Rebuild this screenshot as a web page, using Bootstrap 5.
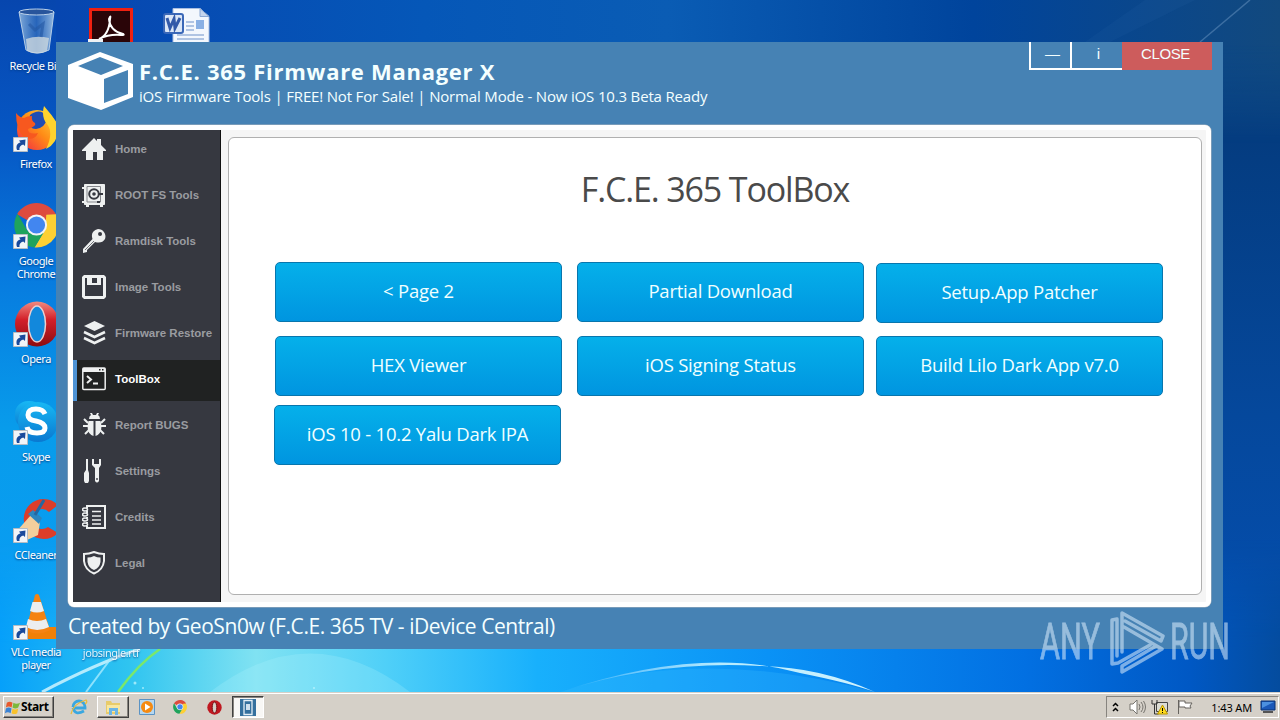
<!DOCTYPE html>
<html lang="en">
<head>
  <meta charset="UTF-8">
  <meta name="viewport" content="width=device-width, initial-scale=1.0">
  <title>F.C.E. 365 Firmware Manager X</title>
  <link href="https://cdn.jsdelivr.net/npm/bootstrap@5.3.0/dist/css/bootstrap.min.css" rel="stylesheet">
  <style>
    body { width: 1280px; height: 720px; overflow: hidden; font-family: "Open Sans", "Noto Sans", sans-serif; line-height: 1; }
    svg { display: block; flex: none; }
    .desktop { height: 692px; }
    .wallpaper { inset: 0; }

    /* desktop shortcuts */
    .shortcuts { gap: 3px; top: 8px; left: 0; height: 684px; }
    .shortcut-col { width: 72px; }
    .shortcut { height: 98px; font: 11px/13px "Noto Sans", sans-serif; letter-spacing: -.45px; text-shadow: 0 1px 2px #003a80; }
    .shortcut span { margin-top: 3px; }
    .shortcut.text-only { height: 49px; opacity: .85; }

    /* application window */
    .app-window { left: 56px; top: 42px; width: 1167px; height: 607px; background: #4682b4; padding: 0 12px; color: #f4ffff; }
    .app-header { height: 83px; }
    .app-logo { margin-top: 10px; }
    .app-title { font-size: 22px; font-weight: 700; margin: 17px 0 0 6px; line-height: 24px; white-space: nowrap; letter-spacing: .72px; }
    .app-subtitle { font-size: 15px; margin: 1px 0 0 6px; line-height: 24px; white-space: nowrap; letter-spacing: -.17px; }
    .win-controls { margin-right: -1px; height: 28px; font-family: "Liberation Sans", sans-serif; font-size: 15px; }
    .win-controls div { display: flex; justify-content: center; padding-top: 4px; border-bottom: 2px solid #fff; }
    .win-controls .wc-min { width: 41px; border-left: 2px solid #fff; padding-left: 4px; }
    .win-controls .wc-info { width: 52px; border-left: 2px solid #fff; padding-left: 3px; }
    .win-controls .wc-close { width: 90px; background: #cd5c5c; border-bottom: 0; letter-spacing: -.4px; padding-right: 3px; }
    .app-panel { width: 1143px; height: 482px; background: #f5f5f5; border: 5px solid #fff; border-radius: 6px; box-shadow: 0 0 0 .5px #a9b4bd; }
    .side-menu { width: 148px; background: #363840; border-right: 1px solid #111; gap: 5px; }
    .side-item { height: 41px; padding: 0 0 3px 9px; gap: 9px; font: bold 11.5px/14px "Liberation Sans", sans-serif; color: #9a9ca0; white-space: nowrap; }
    .side-item svg { color: #eef0f0; }
    .side-item.current { background: #202222; color: #fff; border-left: 4px solid #4d93d6; padding-left: 5px; }
    .page-box { width: 974px; height: 458px; margin: 7px 0 0 7px; border: 1px solid #b0b0b0; border-radius: 6px; background: #fff; }
    .page-title { font-size: 34px; line-height: 46px; color: #4a4a4a; font-weight: 400; margin: 28px 0 50px; letter-spacing: -1.15px; }
    .tool-grid { padding-left: 46px; }
    .tool-col { width: 287px; gap: 14px; margin-right: 15px; }
    .tool-col + .tool-col { margin-right: 12px; }
    .tool-btn { height: 60px; flex: none; border-radius: 5px; border: 1px solid #0876ad; background: linear-gradient(#05b0ea, #0095e0); color: #f0ffff; font-size: 18.5px; letter-spacing: -.22px; padding: 0 0 2px; }
    .tool-btn:hover { color: #fff; }
    .tool-btn.last-row { margin: -5px 1px 0 -1px; }
    .tool-btn.lowered { margin: 1px 0 -1px; }
    .app-footer { height: 42px; font-size: 21px; white-space: nowrap; letter-spacing: -.43px; padding-bottom: 4px; }

    .watermark { left: 1036px; top: 606px; overflow: visible; }

    /* taskbar */
    .taskbar { height: 28px; background: #d5d0c8; border-top: 1px solid #d5d0c8; box-shadow: inset 0 1px #fff; padding: 3px 1px 2px 3px; font-family: "Noto Sans", sans-serif; }
    .start-btn { width: 51px; height: 22px; border: 1px solid; border-color: #fff #404040 #404040 #fff; box-shadow: inset -1px -1px #87847f; font: bold 12px/20px "Noto Sans", sans-serif; color: #000; letter-spacing: -.4px; }
    .quick-launch { margin-left: 9px; gap: 1.8px; }
    .task-btn { width: 32px; height: 22px; }
    .task-btn.raised { border: 1px solid; border-color: #fff #404040 #404040 #fff; box-shadow: inset -1px -1px #87847f; background: #dedad3; }
    .task-btn.pressed { border: 1px solid; border-color: #404040 #fff #fff #404040; box-shadow: inset 1px 1px #87847f; background: #f8f7f5; }
    .tray { width: 173px; height: 22px; border: 1px solid; border-color: #87847f #fff #fff #87847f; font-size: 11px; color: #000; padding: 0 2px 0 3px; letter-spacing: -.15px; }
  </style>
</head>
<body>
  <!-- shared icon shapes -->
  <svg width="0" height="0" class="position-absolute">
    <defs>
      <linearGradient id="redball" x2="0" y2="1"><stop stop-color="#f08a80"/><stop offset=".4" stop-color="#d3202a"/><stop offset="1" stop-color="#8d0c10"/></linearGradient>
      <linearGradient id="glass"><stop stop-color="#8fb6de" stop-opacity=".9"/><stop offset=".5" stop-color="#3e78c0" stop-opacity=".6"/><stop offset="1" stop-color="#a5c6e6" stop-opacity=".9"/></linearGradient>
      <linearGradient id="fox" x1="0" y1="1" x2="1" y2="0"><stop stop-color="#f0204c"/><stop offset=".5" stop-color="#ff8a16"/><stop offset="1" stop-color="#ffe03c"/></linearGradient>
      <linearGradient id="sky" x2="0" y2="1"><stop stop-color="#18b8f4"/><stop offset="1" stop-color="#0a78d0"/></linearGradient>
      <symbol id="arrow" viewBox="0 0 15 15"><path d="M.5.5h14v14H.5z" fill="#f2f5f8" stroke="#b5bcc4"/><path d="M4 13C2.500 8.500 4.500 6 7.500 5.500L6 3.500 12.500 2.500 12 9 10.200 7.500C7.500 8.500 6 10 6.500 13z" fill="#1a4a9c"/></symbol>
      <symbol id="chrome" viewBox="0 0 46 46">
        <path d="M23 23 3.100 11.500A23 23 0 0 1 42.900 11.500z" fill="#dd4b3e"/><path d="M23 1A22 22 0 0 1 42.500 12H23z" fill="#dd4b3e"/>
        <path d="M42.900 11.500A23 23 0 0 1 21 45.500L32 27 33 12z" fill="#fdd034"/><path d="M3.500 11A23 23 0 0 0 21 45.500L31 29 14 29z" fill="#1fa35c"/>
        <circle cx="23" cy="22.500" r="10.800" fill="#f4f4f4"/><circle cx="23" cy="22.500" r="8.800" fill="#4286f0"/>
      </symbol>
      <symbol id="opera" viewBox="0 0 46 46"><ellipse cx="23" cy="23" rx="22" ry="22.500" fill="url(#redball)"/><ellipse cx="23" cy="23" rx="8.500" ry="18" fill="#1288dc" stroke="#ead0d0" stroke-width="1.500"/></symbol>
      <symbol id="winflag" viewBox="0 0 18 18"><path d="M3 4Q6 2 9 4L8 9Q5 7 2 9z" fill="#e8592b"/><path d="M10 4Q13 6 17 4L15 9Q12 11 9 9z" fill="#7db83a"/><path d="M2 10Q5 8 8 10L7 15Q4 13 1 15z" fill="#3a83d4"/><path d="M9 10Q12 12 15 10L14 15Q11 17 8 15z" fill="#f8c22c"/></symbol>
    </defs>
  </svg>

  <div class="desktop position-relative overflow-hidden">
    <svg class="wallpaper position-absolute" width="1280" height="692">
      <defs>
        <linearGradient id="wv" x2="0" y2="1"><stop stop-color="#0746ae"/><stop offset=".2" stop-color="#0657c4"/><stop offset=".4" stop-color="#077bdf"/><stop offset=".62" stop-color="#089ceb"/><stop offset=".95" stop-color="#0a9df6"/></linearGradient>
        <linearGradient id="wh" x2="0" y2="1"><stop stop-color="#0b4a8a"/><stop offset=".2" stop-color="#043c80"/><stop offset=".6" stop-color="#05489c"/><stop offset="1" stop-color="#0450b4"/></linearGradient>
        <linearGradient id="fadeR"><stop offset=".6" stop-color="#fff" stop-opacity="0"/><stop offset=".95" stop-color="#fff"/></linearGradient>
        <mask id="mr"><rect width="1280" height="692" fill="url(#fadeR)"/></mask>
        <linearGradient id="fadeUp" x2="0" y2="1"><stop stop-color="#fff" stop-opacity="0"/><stop offset="1" stop-color="#fff"/></linearGradient>
        <mask id="mb"><rect y="540" width="1280" height="110" fill="url(#fadeUp)"/><rect y="650" width="1280" height="42" fill="#fff"/></mask>
        <linearGradient id="fadeDown" x2="0" y2="1"><stop stop-color="#fff"/><stop offset="1" stop-color="#fff" stop-opacity="0"/></linearGradient>
        <mask id="mt"><rect width="1280" height="43" fill="#fff"/><rect y="43" width="1280" height="100" fill="url(#fadeDown)"/></mask>
        <linearGradient id="wtop"><stop stop-color="#0746b0"/><stop offset=".3" stop-color="#0557b8"/><stop offset=".5" stop-color="#0a5cb4"/><stop offset=".75" stop-color="#00449c"/><stop offset="1" stop-color="#12497e"/></linearGradient>
        <linearGradient id="wbot"><stop stop-color="#06a0fa"/><stop offset=".1" stop-color="#2fc4f0"/><stop offset=".2" stop-color="#80e2f2"/><stop offset=".3" stop-color="#50d0f8"/><stop offset=".42" stop-color="#18b0fc"/><stop offset=".6" stop-color="#0a92f6"/><stop offset=".8" stop-color="#0270e2"/><stop offset=".93" stop-color="#0058c4"/><stop offset="1" stop-color="#044c9e"/></linearGradient>
        <linearGradient id="arc"><stop stop-color="#fff" stop-opacity="0"/><stop offset=".5" stop-color="#c8f4ff"/><stop offset="1" stop-color="#e8ffff"/></linearGradient>
      </defs>
      <rect width="1280" height="692" fill="url(#wv)"/>
      <rect width="1280" height="692" fill="url(#wh)" mask="url(#mr)"/>
      <rect x="56" width="1224" height="143" fill="url(#wtop)" mask="url(#mt)"/>
      <rect y="540" width="1280" height="152" fill="url(#wbot)" mask="url(#mb)"/>
      <path d="M1200 42 1250 0" stroke="#5c88b8" stroke-opacity=".6" stroke-width="1.500"/>
      <path d="M1085 42 1145 0h50L1110 42z" fill="#2a68a8" opacity=".15"/>
      <path d="M210 692Q310 615 410 692z" fill="#b8f4ff" opacity=".22"/>
      <path d="M42 692Q95 664 140 649" stroke="#d8f8ff" stroke-width="3" fill="none" opacity=".8"/>
      <path d="M86 692 112 657" stroke="#a8ecff" stroke-width="2" opacity=".8"/>
      <path d="M118 692Q138 664 160 649" stroke="#7be86a" stroke-width="2.500" fill="none"/>
      <path d="M560 692Q700 645 800 673 850 683 875 692 820 667 760 666 660 660 560 692z" fill="url(#arc)" opacity=".9"/>
      <path d="M560 692Q700 645 875 692z" fill="#40c0ff" opacity=".25"/>
      <g fill="#c8f8ff" opacity=".7"><circle cx="135" cy="683" r="1.500"/><circle cx="143" cy="688" r="1"/><circle cx="314" cy="688" r="1"/></g>
    </svg>

    <div class="shortcuts position-absolute d-flex text-white text-center">
      <div class="shortcut-col d-flex flex-column">
        <div class="shortcut d-flex flex-column align-items-center">
          <svg width="48" height="48"><path d="M7 4h35L37 42q-12 6-23 0z" fill="url(#glass)" stroke="#b5cde6"/><path d="M14 31q11-4 23-1l-2 13q-10 5-20 0z" fill="#cdd8de" opacity=".8"/><ellipse cx="24.500" cy="4" rx="17.500" ry="3" fill="#28559c" stroke="#bcd2ea"/><path d="m17 16 6 6 8-6-2 13" fill="none" stroke="#2458a4" stroke-width="3" opacity=".6"/></svg>
          <span class="text-nowrap">Recycle Bin</span>
        </div>
        <div class="shortcut d-flex flex-column align-items-center">
          <svg width="48" height="48"><circle cx="25" cy="24" r="20" fill="url(#fox)"/><path d="M18 9q10-8 18 2-3 11-12 12-9 0-6-14z" fill="#204db4"/><path d="M32 0q8 9 13 17 4 18-11 26 8-16 1-25-6-7-3-18z" fill="#ffd32e"/><path d="M4 7q4 5 8 5 3-2 8-2-1 5 3 7 2 3-7 6 0 6 10 4-4 9-14 4Q4 24 4 7z" fill="#f7581f"/><use href="#arrow" x="1" y="31" width="15" height="15"/></svg>
          <span>Firefox</span>
        </div>
        <div class="shortcut d-flex flex-column align-items-center">
          <svg width="48" height="48"><use href="#chrome" x="2" y="0" width="45" height="45"/><use href="#arrow" x="1" y="31" width="15" height="15"/></svg>
          <span>Google<br>Chrome</span>
        </div>
        <div class="shortcut d-flex flex-column align-items-center">
          <svg width="48" height="48"><use href="#opera" x="2" y="0" width="46" height="46"/><use href="#arrow" x="1" y="31" width="15" height="15"/></svg>
          <span>Opera</span>
        </div>
        <div class="shortcut d-flex flex-column align-items-center">
          <svg width="48" height="48"><rect x="3" y="2" width="28" height="28" rx="13" fill="url(#sky)"/><circle cx="26" cy="23" r="20" fill="url(#sky)"/><path d="M33 15q-2-5-9-5-8 0-8 6 0 5 8 6 9 2 9 7 0 5-8 5-9 0-10-6" fill="none" stroke="#fff" stroke-width="5"/><use href="#arrow" x="1" y="31" width="15" height="15"/></svg>
          <span>Skype</span>
        </div>
        <div class="shortcut d-flex flex-column align-items-center">
          <svg width="48" height="48"><path d="M46 8A20 20 0 1 0 46 36L36 30A10 10 0 1 1 37 15z" fill="#dc3d2a"/><path d="M19 18 28 25 26 38 15 43 3 36z" fill="#f3cf9c"/><path d="m16 17 5-4 9 8-3 6z" fill="#2c86c0"/><path d="M23 18 32 3" stroke="#2667a0" stroke-width="3"/><use href="#arrow" x="1" y="31" width="15" height="15"/></svg>
          <span>CCleaner</span>
        </div>
        <div class="shortcut d-flex flex-column align-items-center">
          <svg width="48" height="48"><path d="M9 33h36l4 12H7z" fill="#f08008"/><path d="M23 1q2-2 4 0l11 35q-13 7-24 0z" fill="#f58312"/><path d="M20.500 8h8.500l3 9q-7 3-14 0zM16 25q9 4 18 0l3 8q-12 6-23 0z" fill="#eceef0"/><use href="#arrow" x="1" y="31" width="15" height="15"/></svg>
          <span>VLC media<br>player</span>
        </div>
      </div>
      <div class="shortcut-col d-flex flex-column justify-content-between">
        <div class="shortcut d-flex flex-column align-items-center">
          <svg width="48" height="48"><path d="M3.500 1.500h41v44h-41z" fill="#2a0508" stroke="#f02010" stroke-width="3"/><path d="M12 31q10-4 11-20 1-5-1 0 1 12 14 15 2 1-2 1-12-1-22 4z" fill="none" stroke="#fff" stroke-width="2"/><path d="M1 31h15v15H1z" fill="#eef1f4"/></svg>
        </div>
        <div class="shortcut text-only d-flex flex-column align-items-center"><span>jobsingle.rtf</span></div>
      </div>
      <div class="shortcut-col">
        <div class="shortcut d-flex flex-column align-items-center">
          <svg width="48" height="48"><path d="M11 .5h27l9 8V46H11z" fill="#f3f7fd" stroke="#a9bee0"/><path d="M38 .5v8h9z" fill="#c5d5ed" stroke="#8ba8d4"/><path d="M24 14h8M24 18h8M24 22h8M15 27h27M15 31h27" stroke="#9ab4da" stroke-width="1.500"/><path d="M34 12h8v9h-8z" fill="#8ab0e4"/><rect x="2" y="6" width="19" height="19" rx="2" fill="#dbe6f6" stroke="#3b68b8" stroke-width="2"/><path d="m5 10 3 10 4-9 1 9 5-10" fill="none" stroke="#3259a8" stroke-width="3"/></svg>
        </div>
      </div>
    </div>

    <main class="app-window position-absolute d-flex flex-column">
      <header class="app-header d-flex">
        <svg class="app-logo" width="65" height="58" viewBox="0 0 65 58" fill="#fff"><path fill-rule="evenodd" d="M32 0 65 12v33L33 58 0 46V13zM32 5 10 14l23 9 22-9zM60 18 36 27v24l24-9z"/></svg>
        <div class="flex-grow-1">
          <h1 class="app-title">F.C.E. 365 Firmware Manager X</h1>
          <div class="app-subtitle">iOS Firmware Tools | FREE! Not For Sale! | Normal Mode - Now iOS 10.3 Beta Ready</div>
        </div>
        <div class="win-controls d-flex">
          <div class="wc-min">—</div>
          <div class="wc-info">i</div>
          <div class="wc-close">CLOSE</div>
        </div>
      </header>

      <section class="app-panel d-flex">
        <nav class="side-menu d-flex flex-column">
          <div class="side-item d-flex align-items-center">
            <svg width="24" height="24" fill="currentColor"><path d="M0 13 12 1l3 3V2h4v6l5 5v1h-3v9h-6v-8h-4v8H4v-9H0z"/></svg><span>Home</span>
          </div>
          <div class="side-item d-flex align-items-center">
            <svg width="24" height="24" fill="none" stroke="currentColor"><path d="M2.500 1.500h20v20h-20z" fill="currentColor"/><path d="M5 3.500h13.500V19H5z" stroke="#85878c"/><path d="M0 5h3M0 19h3M4 23h3M18 23h3" stroke-width="2"/><circle cx="12" cy="11" r="4.800" stroke="#363840" stroke-width="2"/><circle cx="12" cy="11" r="1.800" fill="#363840" stroke="none"/><path d="M16 11h5M15 19h3" stroke="#363840" stroke-width="2"/></svg><span>ROOT FS Tools</span>
          </div>
          <div class="side-item d-flex align-items-center">
            <svg width="24" height="24" fill="currentColor"><path fill-rule="evenodd" d="M16 0a7.500 7.500 0 0 1 7 10q-3 5-10 3L5 21v2l-4 1v-4L10.500 10Q8 2 16 0zm2 3a2 2 0 1 0 .1 4A2 2 0 0 0 18 3z"/><path d="M3 21 12 12" stroke="#70737a"/></svg><span>Ramdisk Tools</span>
          </div>
          <div class="side-item d-flex align-items-center">
            <svg width="24" height="24" fill="currentColor"><path fill-rule="evenodd" d="M2 0h20l2 2v20l-2 2H2l-2-2V2zM3 3v18h18V3h-2v7H5V3zM10 3v5h5V3z"/></svg><span>Image Tools</span>
          </div>
          <div class="side-item d-flex align-items-center">
            <svg width="24" height="24" fill="currentColor"><path d="m12.500 0 10.500 5-10.500 5-10.500-5z"/><path d="m2 11 10.500 5L23 11M2 17l10.500 5L23 17" fill="none" stroke="currentColor" stroke-width="2.500"/></svg><span>Firmware Restore</span>
          </div>
          <div class="side-item current d-flex align-items-center">
            <svg width="24" height="24" fill="none" stroke="currentColor" stroke-width="1.500"><rect x=".8" y="1" width="22.400" height="21.500" rx="1"/><path d="M1 3h22" stroke-width="4"/><path d="M17 2.800h1.500M20 2.800h1.500" stroke="#202222"/><path d="m5 9 4 3.500L5 16M11 16.500h5" stroke-width="2"/></svg><span>ToolBox</span>
          </div>
          <div class="side-item d-flex align-items-center">
            <svg width="24" height="24" fill="currentColor"><path d="M7 6q0-3 2-4l-1-2h2l1 2h3l1-2h2l-1 2q2 1 2 4z"/><path d="M6.500 8h5v15q-6-2-6-10zM13.500 8h5l1 5q0 8-6 10z"/><path d="m2 6 4 4M23 6l-4 4M1 13h5M24 13h-5M3 21l4-4M22 21l-4-4" stroke="currentColor" stroke-width="2"/></svg><span>Report BUGS</span>
          </div>
          <div class="side-item d-flex align-items-center">
            <svg width="24" height="24" fill="currentColor"><path d="M4 0h2v11l1 3v8l-1 2H3l-1-2v-8l2-3zM10 0h2v5h5V0h2v6l-2 3v13q-2 3-4 0V9l-3-3z"/><circle cx="15" cy="20" r=".9" fill="#363840"/></svg><span>Settings</span>
          </div>
          <div class="side-item d-flex align-items-center">
            <svg width="24" height="24" fill="none" stroke="currentColor" stroke-width="2"><path d="M5 3V1h18v22H5v-2M5 6v2M5 12v1M5 17v1"/><path d="M10 6.500h9M10 11h9M10 15h9M10 19h9" stroke-width="1.500"/><g stroke-width="1.500"><ellipse cx="3" cy="4.500" rx="2.500" ry="1.500"/><ellipse cx="3" cy="9.500" rx="2.500" ry="1.500"/><ellipse cx="3" cy="14.500" rx="2.500" ry="1.500"/><ellipse cx="3" cy="19.500" rx="2.500" ry="1.500"/></g></svg><span>Credits</span>
          </div>
          <div class="side-item d-flex align-items-center">
            <svg width="24" height="24" fill="none"><path d="M12 1q5 2 10 2v7Q21 19 12 22.500 3 19 2 10V3q5 0 10-2z" stroke="currentColor" stroke-width="2"/><path d="M12 5q3 1.500 6.500 1.500V11q-1 6-6.500 8-5.500-2-6.500-8V6.500Q9 6.500 12 5z" fill="currentColor"/></svg><span>Legal</span>
          </div>
        </nav>

        <div class="page-box">
          <h2 class="page-title text-center">F.C.E. 365 ToolBox</h2>
          <div class="d-flex tool-grid">
            <div class="tool-col d-flex flex-column">
              <button class="btn tool-btn">&lt; Page 2</button>
              <button class="btn tool-btn">HEX Viewer</button>
              <button class="btn tool-btn last-row">iOS 10 - 10.2 Yalu Dark IPA</button>
            </div>
            <div class="tool-col d-flex flex-column">
              <button class="btn tool-btn">Partial Download</button>
              <button class="btn tool-btn">iOS Signing Status</button>
            </div>
            <div class="tool-col d-flex flex-column">
              <button class="btn tool-btn lowered">Setup.App Patcher</button>
              <button class="btn tool-btn">Build Lilo Dark App v7.0</button>
            </div>
          </div>
        </div>
      </section>

      <footer class="app-footer d-flex align-items-center">Created by GeoSn0w (F.C.E. 365 TV - iDevice Central)</footer>
    </main>

    <svg class="watermark position-absolute" width="220" height="80" opacity=".58">
      <g fill="#d4e8fa" stroke="#d4e8fa" stroke-width=".8" font-family="Roboto, sans-serif" font-size="50">
        <text x="4" y="53" textLength="60" lengthAdjust="spacingAndGlyphs">ANY</text>
        <text x="134" y="53" textLength="60" lengthAdjust="spacingAndGlyphs">RUN</text>
      </g>
      <path d="M86 46V7l41 23-2 5-36-20M88 21l38 22-40 23v-6l34-20M81 13l-5 1v44l6-1 32-18M81 14v36" fill="none" stroke="#d4e8fa" stroke-width="3.500" stroke-linejoin="round" stroke-linecap="round"/>
    </svg>
  </div>

  <div class="taskbar d-flex align-items-center">
    <div class="start-btn d-flex align-items-center"><svg width="17" height="17"><use href="#winflag"/></svg>Start</div>
    <div class="quick-launch d-flex align-items-center">
      <div class="task-btn d-flex align-items-center justify-content-center">
        <svg width="18" height="18"><path d="M3 9a6 6 0 0 1 12 0v1H3M3 10q2 8 11 3" fill="none" stroke="#3aa7e0" stroke-width="2.800"/><path d="M1 16Q3 6 16 2q2 2-1 4" fill="none" stroke="#e8bc3c" stroke-width="1.300"/></svg>
      </div>
      <div class="task-btn raised d-flex align-items-center justify-content-center">
        <svg width="18" height="17"><path d="M2 2h5l1 2h8v11H2z" fill="#e8cb6a"/><path d="M3 6h13v7H3z" fill="#f8e7a0"/><path d="M5 16V9h9v7h-3v-4H8v4z" fill="#6cb5e6"/></svg>
      </div>
      <div class="task-btn d-flex align-items-center justify-content-center">
        <svg width="16" height="16"><path d="M.5.5h15v15H.5z" fill="#b6d7f0" stroke="#5b93c4"/><circle cx="8" cy="8" r="6" fill="#f58a12"/><path d="M6 4.500v7L11.500 8z" fill="#fff"/></svg>
      </div>
      <div class="task-btn d-flex align-items-center justify-content-center"><svg width="14" height="14"><use href="#chrome"/></svg></div>
      <div class="task-btn d-flex align-items-center justify-content-center">
        <svg width="15" height="15"><circle cx="7.500" cy="7.500" r="7.200" fill="#c01820"/><ellipse cx="7.500" cy="7.500" rx="2.300" ry="5.500" fill="#d5d0c8" stroke="#7a0a10"/></svg>
      </div>
      <div class="task-btn pressed d-flex align-items-center justify-content-center">
        <svg width="16" height="17"><path d="M0 0h16v17H0z" fill="#35709e"/><path d="M4 1.500h8v14H4z" fill="none" stroke="#e4eef6" stroke-width="1.300"/><path d="M6 5h4v6H6z" fill="#cfe0ee"/></svg>
      </div>
    </div>
    <div class="tray d-flex align-items-center ms-auto">
      <svg width="11" height="14" fill="none" stroke="#000" stroke-width="1.500"><path d="m3 6 2.500-2.500L8 6M3 11l2.500-2.500L8 11"/></svg>
      <svg width="18" height="16" class="ms-2" fill="none" stroke="#77746f"><path d="M1 5h3l4-4v14l-4-4H1z" fill="#fff"/><path d="M10 5q2 3 0 6M12 3q4 5 0 10M14.500 2q4 6 0 12"/></svg>
      <svg width="18" height="16" class="ms-1 ps-0" fill="none" stroke="#444"><path d="M5.500 3.500h11v9h-11z" fill="#dcdcd4"/><path d="M1 1v4h5V1M3.500 5v10h4" stroke="#333"/><path d="m11.500 6 5 9h-10z" fill="#ffdc1e" stroke="#b89400"/><path d="M11.500 9v3M11.500 13v1" stroke="#000"/></svg>
      <svg width="18" height="16" class="ms-2" fill="#fff" stroke="#66635e"><path d="M1.500 1v14M2 2h6v2h7l-2 3 1 2H8V8H2z"/></svg>
      <span class="ms-auto text-nowrap">1:43 AM</span>
      <svg width="16" height="14" class="ms-2"><path d="M1 1h14v9H1z" fill="#1b58b8" stroke="#0a3070"/><path d="M2 2h12L2 8z" fill="#4c90e0"/><path d="M3 12h10" stroke="#555" stroke-width="2"/></svg>
    </div>
  </div>

  <script src="https://cdn.jsdelivr.net/npm/bootstrap@5.3.0/dist/js/bootstrap.bundle.min.js"></script>
</body>
</html>
